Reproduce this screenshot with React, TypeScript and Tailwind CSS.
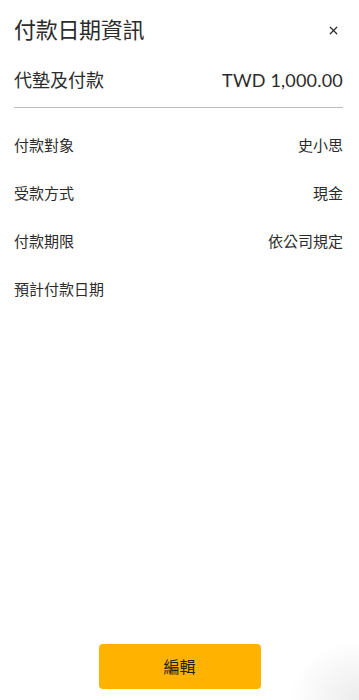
import { X } from "lucide-react";

const rows = [
  { label: "付款對象", value: "史小思" },
  { label: "受款方式", value: "現金" },
  { label: "付款期限", value: "依公司規定" },
  { label: "預計付款日期", value: "" },
];

export default function App() {
  return (
    <div
      className="flex h-[700px] w-full flex-col bg-white bg-[radial-gradient(ellipse_70px_60px_at_100%_100%,#ececec,#ffffff00)] text-[#2b2b2b]"
      style={{ fontFamily: "Lato, 'Noto Sans CJK TC', sans-serif" }}
    >
      <header className="flex h-[60px] items-center justify-between pl-[14px] pr-[19px]">
        <h1 className="text-[22px] font-normal leading-none tracking-[-0.3px]">付款日期資訊</h1>
        <X className="h-[13px] w-[13px]" strokeWidth={2.2} />
      </header>

      <div className="ml-[14px] mr-[16px] flex h-[48px] items-center justify-between border-b border-[#bdbdbd] pb-[7px] text-[18px] leading-none">
        <span>代墊及付款</span>
        <span className="tracking-[0.2px]">TWD 1,000.00</span>
      </div>

      <div className="ml-[14px] mr-[16px] pt-[13px]">
        {rows.map((row) => (
          <div
            key={row.label}
            className="flex h-[48px] items-center justify-between text-[15px] leading-none"
          >
            <span>{row.label}</span>
            <span>{row.value}</span>
          </div>
        ))}
      </div>

      <div className="mt-auto flex justify-center pb-[11px]">
        <button className="h-[45px] w-[162px] rounded-[4px] bg-[#ffb300] text-[16px] text-[#212121]">
          編輯
        </button>
      </div>
    </div>
  );
}
